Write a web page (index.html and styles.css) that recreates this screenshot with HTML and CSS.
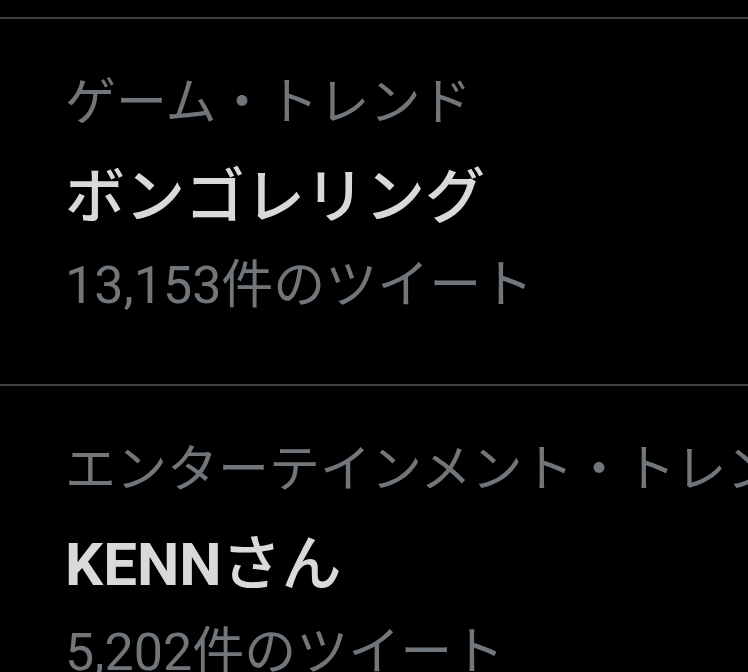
FILE: index.html
```html
<!DOCTYPE html>
<html lang="ja">
<head>
  <meta charset="UTF-8">
  <title>トレンド</title>
  <link rel="stylesheet" href="styles.css">
</head>
<body>

  <div class="trends">
    <div class="trend-top"></div>

    <div class="trend">
      <div class="trend-cat">ゲーム・トレンド</div>
      <div class="trend-name">ボンゴレリング</div>
      <div class="trend-count">13,153件のツイート</div>
    </div>

    <div class="trend">
      <div class="trend-cat">エンターテインメント・トレンド</div>
      <div class="trend-name"><span class="latin">KENN</span>さん</div>
      <div class="trend-count">5,202件のツイート</div>
    </div>
  </div>

</body>
</html>
```

FILE: styles.css
```css
body {
  margin: 0;
  background: #000;
  font-family: Roboto, "Noto Sans CJK JP", sans-serif;
  overflow: hidden;
}

.trends {
  width: 748px;
}

.trend-top {
  height: 17px;
  border-bottom: 2px solid #3d4043;
}

.trend {
  padding: 54px 0 68px 65px;
  border-bottom: 2px solid #3d4043;
  white-space: nowrap;
  overflow: hidden;
}

.trend-cat {
  font-size: 51px;
  line-height: 60px;
  color: #71767b;
}

.trend-name {
  margin-top: 30px;
  font-size: 60px;
  line-height: 70px;
  font-weight: 500;
  color: #d9d9d9;
}

.trend-name .latin {
  font-weight: bold;
}

.trend-count {
  margin-top: 23px;
  font-size: 52px;
  line-height: 60px;
  color: #71767b;
}
```
